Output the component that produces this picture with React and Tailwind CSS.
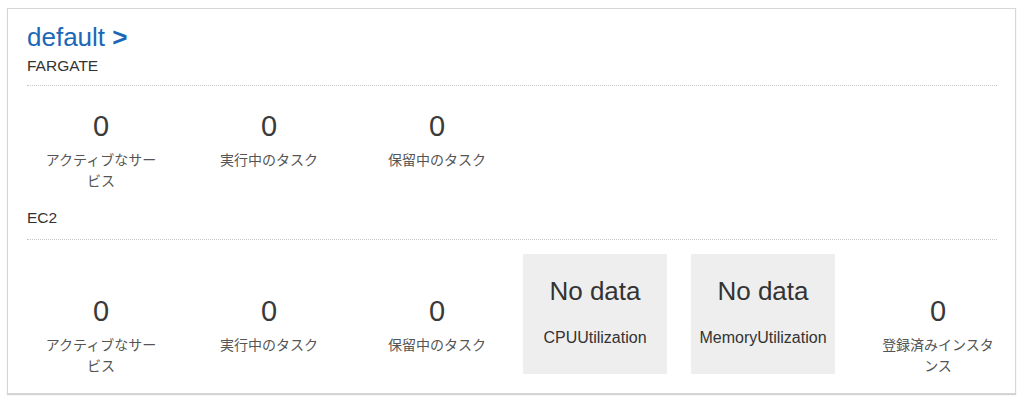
import React from "react";

const jp = { fontFamily: '"Liberation Sans", "Noto Sans CJK JP", Arial, sans-serif' };

function Stat({ label, className = "" }) {
  return (
    <div className={"shrink-0 flex flex-col items-center text-center " + className}>
      <div className="text-[29px] leading-[36px] text-[#3a3a3a]">0</div>
      <div className="mt-[6px] text-[14px] leading-[21px] text-[#555]">{label}</div>
    </div>
  );
}

function Box({ metric, className = "" }) {
  return (
    <div className={"shrink-0 w-[144px] h-[120px] bg-[#eeeeee] flex flex-col items-center pt-[21px] " + className}>
      <div className="text-[26px] leading-[32px] text-[#333]">No data</div>
      <div className="mt-[21px] text-[16px] leading-[20px] text-[#333]">{metric}</div>
    </div>
  );
}

export default function App() {
  return (
    <div className="w-[1024px] h-[403px] bg-white pl-[7px] pr-[8px] pt-[8px]" style={jp}>
      <div className="border border-[#d6d6d6] shadow-[0_1px_1px_rgba(0,0,0,0.18)] pl-[19px] pr-[18px] pt-[12px] pb-[16px]">
        <div className="text-[26px] leading-[32px] text-[#1b68b8]">
          default <span className="font-bold">&gt;</span>
        </div>
        <div className="mt-[3px] text-[15.5px] leading-[20px] text-[#333] pb-[9px] border-b border-dotted border-[#c8c8c8]">
          FARGATE
        </div>
        <div className="flex mt-[22px]">
          <Stat label="アクティブなサービス" className="w-[148px] px-[14px]" />
          <Stat label="実行中のタスク" className="w-[148px] px-[14px] ml-[20px]" />
          <Stat label="保留中のタスク" className="w-[148px] px-[14px] ml-[20px]" />
        </div>
        <div className="mt-[16px] text-[15.5px] leading-[20px] text-[#333] pb-[11px] border-b border-dotted border-[#c8c8c8]">
          EC2
        </div>
        <div className="flex items-start mt-[14px]">
          <Stat label="アクティブなサービス" className="w-[148px] px-[14px] mt-[39px]" />
          <Stat label="実行中のタスク" className="w-[148px] px-[14px] ml-[20px] mt-[39px]" />
          <Stat label="保留中のタスク" className="w-[148px] px-[14px] ml-[20px] mt-[39px]" />
          <Box metric="CPUUtilization" className="ml-[12px]" />
          <Box metric="MemoryUtilization" className="ml-[24px]" />
          <Stat label="登録済みインスタンス" className="w-[130px] px-[5px] ml-[38px] mt-[39px]" />
        </div>
      </div>
    </div>
  );
}
